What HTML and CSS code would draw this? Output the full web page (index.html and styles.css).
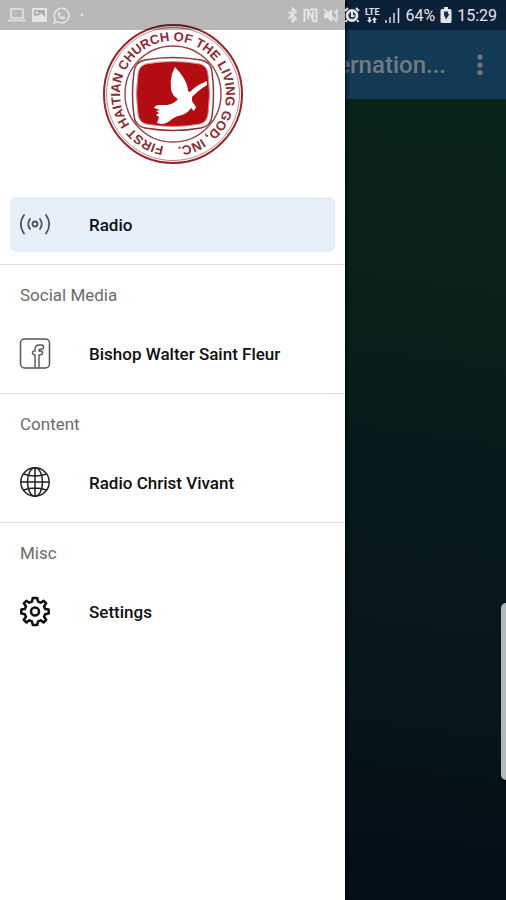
FILE: index.html
```html
<!DOCTYPE html>
<html lang="en">
<head>
<meta charset="utf-8">
<meta name="viewport" content="width=device-width, initial-scale=1">
<title>Radio</title>
<link rel="stylesheet" href="styles.css">
</head>
<body>
<div class="screen">
  <header class="appbar">
    <h1 class="title">ernation...</h1>
    <button class="more" type="button" aria-label="More options">
      <svg width="6" height="22" viewBox="0 0 6 22" fill="currentColor"><circle cx="3" cy="3" r="2.6"/><circle cx="3" cy="11" r="2.6"/><circle cx="3" cy="18.500" r="2.600"/></svg>
    </button>
  </header>

  <aside class="drawer">
    <div class="brand">
      <svg class="logo" width="142" height="142" viewBox="-71 -71 142 142" role="img" aria-label="Church seal">
        <defs><path id="ring" d="M0 53A53 53 0 0 1 0 -53A53 53 0 0 1 0 53"/></defs>
        <circle r="69" fill="#fff" stroke="#93282c" stroke-width="2"/>
        <circle r="66.500" fill="none" stroke="#c98486" stroke-width="1"/>
        <circle r="48" fill="none" stroke="#93454a" stroke-width="1.400"/>
        <path d="M-28 -34Q0 -39 28 -34Q38 -32 39 -22Q42 0 39 22Q38 32 28 34Q0 39 -28 34Q-38 32 -39 22Q-42 0 -39 -22Q-38 -32 -28 -34Z" fill="#fff" stroke="#8e3439" stroke-width="1.500"/>
        <path d="M-27 -30Q0 -35 27 -30Q34 -28 35 -20Q38 0 35 20Q34 28 27 30Q0 35 -27 30Q-34 28 -35 20Q-38 0 -35 -20Q-34 -28 -27 -30Z" fill="#b30d12" stroke="#d98a8c" stroke-width="1"/>
        <path d="M2 -27Q6 -23 10 -17Q15 -9 15 -3L17 -2Q22 -8 34 -13V-9Q27 -5 19 3L19 7L23 13L21 17L18 14Q15 19 9 21Q3 22 -1 25Q-6 30 -12 30L-16 29L-14 23L-17 21L-14 19L-17 17L-13 16L-19 14Q-18 11 -13 11H-6Q1 10 5 5Q-1 2 -2 -5Q-3 -13 -1 -20Z" fill="#fff"/>
        <text class="seal-text"><textPath href="#ring" startOffset="9">FIRST HAITIAN CHURCH OF THE LIVING GOD, INC.</textPath></text>
      </svg>
    </div>
    <nav class="menu">
      <a class="item item-active" href="#radio">
        <svg class="icon" viewBox="0 0 32 32" fill="none" stroke="#4c525a" stroke-width="1.800" stroke-linecap="round"><circle cx="16" cy="15" r="2.500"/><path d="M11 10Q7.500 15 11 20M21 10Q24.500 15 21 20M5 6Q-1.500 15 5 24.500M27 6Q33.500 15 27 24.500"/></svg>
        Radio
      </a>
      <section class="group">
        <h2 class="label">Social Media</h2>
        <a class="item" href="#facebook">
          <svg class="icon" viewBox="0 0 32 32" fill="none" stroke="#555" stroke-width="1.500"><rect x="1.500" y="1" width="29" height="29" rx="4"/><path d="M16 29.500V17Q13 16.500 13.500 14Q14 12.500 16 13V11Q16 7 20 7H23Q25 7.500 24.500 10Q24 11.500 21.500 11Q20 11 20 13H22Q24 13.500 23.500 15.500Q23 17 20 17V29.500" stroke-width="1.400"/></svg>
          Bishop Walter Saint Fleur
        </a>
      </section>
      <section class="group">
        <h2 class="label">Content</h2>
        <a class="item" href="#content">
          <svg class="icon" viewBox="0 0 32 32" fill="none" stroke="#222" stroke-width="1.500"><circle cx="16" cy="15" r="14.200"/><ellipse cx="16" cy="15" rx="7.500" ry="14.200"/><path d="M16 1V29M2 15H30M4.500 7Q16 11 27.500 7M4.500 23Q16 19 27.500 23"/></svg>
          Radio Christ Vivant
        </a>
      </section>
      <section class="group">
        <h2 class="label">Misc</h2>
        <a class="item" href="#settings">
          <svg class="icon" viewBox="0 0 32 32" fill="none" stroke="#111" stroke-width="2.500" stroke-linejoin="round"><circle cx="16" cy="15.500" r="4"/><path d="M13.800 2H18.200L19 5.500Q20.500 6 21.700 6.800L24.700 4.800L27.200 7.300L25 10.300Q25.700 11.500 26.100 13L29.700 13.500V17.500L26.100 18.200Q25.700 19.600 25 20.800L27.200 23.800L24.500 26.500L21.700 24.300Q20.500 25.100 19 25.500L18.200 29H13.800L13 25.500Q11.500 25.100 10.300 24.300L7.500 26.500L4.800 23.800L7 20.800Q6.300 19.600 5.900 18.200L2.300 17.500V13.500L5.900 13Q6.300 11.500 7 10.300L4.800 7.300L7.300 4.800L10.300 6.800Q11.500 6 13 5.500Z"/></svg>
          Settings
        </a>
      </section>
    </nav>
  </aside>

  <div class="status">
    <div class="notices">
      <svg width="18" height="14" viewBox="0 0 18 14" fill="none" stroke="currentColor" stroke-width="1.600"><rect x="3" y="1" width="12" height="9"/><path d="M0 12.500H18"/></svg>
      <svg width="15" height="14" viewBox="0 0 15 14"><rect width="15" height="14" rx="1" fill="currentColor"/><path d="M2 2H13V9L9 5L6 8L4 7L2 9Z" fill="#aaa"/><circle cx="5" cy="4.500" r="1.200" fill="#eee"/></svg>
      <svg width="17" height="17" viewBox="0 0 17 17"><path d="M1 16L2.200 12A7.300 7.300 0 1 1 5 14.900Z" fill="none" stroke="currentColor" stroke-width="1.500"/><path d="M6 4.500L7.500 7L6.700 8Q7.500 9.700 9.200 10.300L10.200 9.300L12.500 10.500Q12 12.700 9.800 12.200Q6 11.300 4.800 7.500Q4.400 5.300 6 4.500Z" fill="currentColor"/></svg>
      <svg width="4" height="4" viewBox="0 0 4 4"><circle cx="2" cy="2" r="1.500" fill="currentColor"/></svg>
    </div>
    <div class="signals">
      <svg width="11" height="16" viewBox="0 0 11 16" fill="none" stroke="currentColor" stroke-width="1.800"><path d="M1.500 4.500L9 11.500L5.500 15V1L9 4.500L1.500 11.500"/></svg>
      <svg width="15" height="15" viewBox="0 0 15 15" fill="none" stroke="currentColor" stroke-width="2"><path d="M1.500 14V2Q5 1 5.500 3L10 11.500V3.500M5 4V11.500M7 1.500H13.500V13Q10.500 14.500 9.500 12"/></svg>
      <svg width="16" height="15" viewBox="0 0 16 15"><path d="M1 5H4L9 1V14L4 10H1Z" fill="currentColor"/><path d="M1 1L14 14M11 3L13 5M14 1V12M11 9V12" stroke="currentColor" stroke-width="1.600"/></svg>
      <svg width="16" height="16" viewBox="0 0 16 16"><circle cx="8" cy="8.500" r="5.200" fill="currentColor" stroke="currentColor" stroke-width="2.400"/><circle cx="8" cy="8.500" r="3.600" fill="#26394d"/><path d="M1 4L4 1M12 1L15 4M3 13L1.500 15M13 13L14.500 15M8 5V9H10.500" fill="none" stroke="currentColor" stroke-width="2"/></svg>
      <span class="lte"><span>LTE</span><svg width="10" height="6" viewBox="0 0 10 6" fill="currentColor"><path d="M0 3H1.500V0H3.500V3H5L2.500 6ZM5 3L7.500 0L10 3H8.500V6H6.500V3Z"/></svg></span>
      <svg width="16" height="15" viewBox="0 0 16 15" stroke="currentColor" stroke-width="2"><path d="M2 12V15M6 9V15M10 5V15" opacity=".7"/><path d="M14.500 0V15" stroke-width="1.500"/></svg>
      <span class="charge">64%</span>
      <svg width="12" height="16" viewBox="0 0 12 16"><path d="M4 0H8V2H10Q11.500 2 11.500 3.500V14.500Q11.500 16 10 16H2Q.5 16 .5 14.500V3.500Q.5 2 2 2H4Z" fill="currentColor"/><path d="M4 4.500H8V7H9.500L6 12.500L4 8Z" fill="#1b3046"/></svg>
      <time>15:29</time>
    </div>
  </div>
  <div class="edge-handle"></div>
</div>
</body>
</html>
```
FILE: styles.css
```css
* { box-sizing: border-box; }

body {
  margin: 0;
  font-family: Roboto, "Liberation Sans", sans-serif;
}

.screen {
  position: relative;
  min-height: 100vh;
  overflow: hidden;
  background: linear-gradient(172deg, #040e17 0, #040f18 10%, #06171a 35%, #081b1c 54%, #0a2219 75%, #0a241b 100%);
  background: linear-gradient(188deg, #0a241b 0, #0a2219 28%, #081b1c 48%, #06171a 72%, #040f18 92%, #040e17 100%);
}

.appbar {
  display: flex;
  align-items: center;
  justify-content: flex-end;
  gap: 24px;
  height: 99px;
  padding: 0 16px 0 0;
  border-top: 30px solid #0b2138;
  background: #133a55;
  color: #74797d;
}

.title {
  margin: 0;
  font-size: 24px;
  font-weight: 500;
  line-height: 32px;
}

.more {
  display: flex;
  justify-content: center;
  width: 20px;
  padding: 0;
  border: 0;
  background: none;
  color: inherit;
}

.drawer {
  position: absolute;
  top: 0;
  bottom: 0;
  left: 0;
  width: 68.2%;
  background: #fff;
  box-shadow: 1px 0 4px #000;
}

.brand {
  display: flex;
  justify-content: center;
  height: 197px;
  padding-top: 23px;
}

.seal-text {
  font: bold 13px "Liberation Sans", sans-serif;
  fill: #8d2b32;
}

.item {
  display: flex;
  align-items: center;
  gap: 38px;
  height: 55px;
  margin: 0 10px 12px;
  padding-left: 9px;
  border-radius: 6px;
  color: #101010;
  font-size: 17px;
  font-weight: 500;
  text-decoration: none;
}

.item-active { background: #e6effa; }

.icon {
  flex: none;
  width: 32px;
  height: 32px;
}

.group { border-top: 1px solid #dcdcdc; }

.label {
  margin: 0;
  padding-left: 20px;
  color: #6b6b6b;
  font-size: 17px;
  font-weight: 400;
  line-height: 61px;
}

.status {
  position: absolute;
  top: 0;
  left: 0;
  right: 0;
  display: flex;
  align-items: center;
  justify-content: space-between;
  height: 30px;
  padding: 0 9px 0 8px;
  background: linear-gradient(to right, rgba(0, 0, 0, .28) 68.2%, transparent 68.2%);
  color: #e2e5e8;
  font-size: 16px;
}

.notices,
.signals {
  display: flex;
  align-items: center;
}

.notices { gap: 6px; }
.notices svg:last-child { margin-left: 4px; }
.signals { gap: 5px; }

.lte {
  display: flex;
  flex-direction: column;
  align-items: center;
  font-size: 9px;
  font-weight: 700;
  line-height: 9px;
}

.edge-handle {
  position: absolute;
  top: 67%;
  right: 0;
  width: 5px;
  height: 177px;
  border-radius: 5px 0 0 5px;
  background: #b3b8b9;
}
```
